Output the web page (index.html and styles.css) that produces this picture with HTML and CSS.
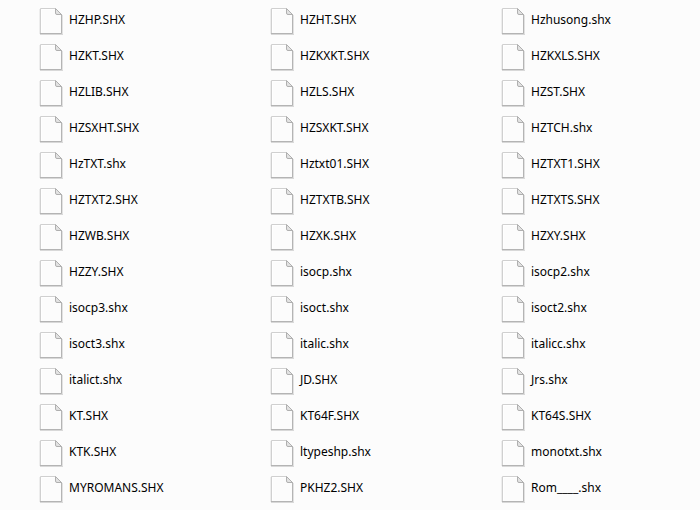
FILE: index.html
```
<!DOCTYPE html>
<html lang="en">
<head>
    <meta charset="UTF-8">
    <meta name="viewport" content="width=device-width, initial-scale=1.0">
    <title>Fonts</title>
    <link rel="stylesheet" href="styles.css">
</head>
<body>
    <!-- Blank document icon, shared by all files -->
    <svg class="sprite" aria-hidden="true">
        <defs>
            <linearGradient id="paper" x1="0" y1="0" x2="1" y2="1">
                <stop offset="0" stop-color="#ffffff"/>
                <stop offset="1" stop-color="#f2f2f2"/>
            </linearGradient>
        </defs>
        <symbol id="file" viewBox="0 0 26 30">
            <path d="M2 28.500H25" fill="none" stroke="#000" stroke-opacity=".14"/>
            <path d="M24.500 9V28" fill="none" stroke="#000" stroke-opacity=".1"/>
            <path d="M1.500 3V28" fill="none" stroke="#000" stroke-opacity=".06"/>
            <path d="M2.500 2.500H17.500L23.500 8.500V27.500H2.500Z" fill="url(#paper)" stroke="#d0d0d0"/>
            <path d="M2 27.500H23.500V8" fill="none" stroke="#b4b4b4"/>
            <path d="M3.500 26.500V3.500H17" fill="none" stroke="#fff"/>
            <path d="M17.500 2.500L23.500 8.500H19Q17.500 8.500 17.500 7Z" fill="#e2e2e2" stroke="#b0b0b0"/>
        </symbol>
    </svg>

    <ul class="files">
        <li class="file"><svg class="icon"><use href="#file"/></svg><span>HZHP.SHX</span></li>
        <li class="file"><svg class="icon"><use href="#file"/></svg><span>HZHT.SHX</span></li>
        <li class="file"><svg class="icon"><use href="#file"/></svg><span>Hzhusong.shx</span></li>
        <li class="file"><svg class="icon"><use href="#file"/></svg><span>HZKT.SHX</span></li>
        <li class="file"><svg class="icon"><use href="#file"/></svg><span>HZKXKT.SHX</span></li>
        <li class="file"><svg class="icon"><use href="#file"/></svg><span>HZKXLS.SHX</span></li>
        <li class="file"><svg class="icon"><use href="#file"/></svg><span>HZLIB.SHX</span></li>
        <li class="file"><svg class="icon"><use href="#file"/></svg><span>HZLS.SHX</span></li>
        <li class="file"><svg class="icon"><use href="#file"/></svg><span>HZST.SHX</span></li>
        <li class="file"><svg class="icon"><use href="#file"/></svg><span>HZSXHT.SHX</span></li>
        <li class="file"><svg class="icon"><use href="#file"/></svg><span>HZSXKT.SHX</span></li>
        <li class="file"><svg class="icon"><use href="#file"/></svg><span>HZTCH.shx</span></li>
        <li class="file"><svg class="icon"><use href="#file"/></svg><span>HzTXT.shx</span></li>
        <li class="file"><svg class="icon"><use href="#file"/></svg><span>Hztxt01.SHX</span></li>
        <li class="file"><svg class="icon"><use href="#file"/></svg><span>HZTXT1.SHX</span></li>
        <li class="file"><svg class="icon"><use href="#file"/></svg><span>HZTXT2.SHX</span></li>
        <li class="file"><svg class="icon"><use href="#file"/></svg><span>HZTXTB.SHX</span></li>
        <li class="file"><svg class="icon"><use href="#file"/></svg><span>HZTXTS.SHX</span></li>
        <li class="file"><svg class="icon"><use href="#file"/></svg><span>HZWB.SHX</span></li>
        <li class="file"><svg class="icon"><use href="#file"/></svg><span>HZXK.SHX</span></li>
        <li class="file"><svg class="icon"><use href="#file"/></svg><span>HZXY.SHX</span></li>
        <li class="file"><svg class="icon"><use href="#file"/></svg><span>HZZY.SHX</span></li>
        <li class="file"><svg class="icon"><use href="#file"/></svg><span>isocp.shx</span></li>
        <li class="file"><svg class="icon"><use href="#file"/></svg><span>isocp2.shx</span></li>
        <li class="file"><svg class="icon"><use href="#file"/></svg><span>isocp3.shx</span></li>
        <li class="file"><svg class="icon"><use href="#file"/></svg><span>isoct.shx</span></li>
        <li class="file"><svg class="icon"><use href="#file"/></svg><span>isoct2.shx</span></li>
        <li class="file"><svg class="icon"><use href="#file"/></svg><span>isoct3.shx</span></li>
        <li class="file"><svg class="icon"><use href="#file"/></svg><span>italic.shx</span></li>
        <li class="file"><svg class="icon"><use href="#file"/></svg><span>italicc.shx</span></li>
        <li class="file"><svg class="icon"><use href="#file"/></svg><span>italict.shx</span></li>
        <li class="file"><svg class="icon"><use href="#file"/></svg><span>JD.SHX</span></li>
        <li class="file"><svg class="icon"><use href="#file"/></svg><span>Jrs.shx</span></li>
        <li class="file"><svg class="icon"><use href="#file"/></svg><span>KT.SHX</span></li>
        <li class="file"><svg class="icon"><use href="#file"/></svg><span>KT64F.SHX</span></li>
        <li class="file"><svg class="icon"><use href="#file"/></svg><span>KT64S.SHX</span></li>
        <li class="file"><svg class="icon"><use href="#file"/></svg><span>KTK.SHX</span></li>
        <li class="file"><svg class="icon"><use href="#file"/></svg><span>ltypeshp.shx</span></li>
        <li class="file"><svg class="icon"><use href="#file"/></svg><span>monotxt.shx</span></li>
        <li class="file"><svg class="icon"><use href="#file"/></svg><span>MYROMANS.SHX</span></li>
        <li class="file"><svg class="icon"><use href="#file"/></svg><span>PKHZ2.SHX</span></li>
        <li class="file"><svg class="icon"><use href="#file"/></svg><span>Rom____.shx</span></li>
    </ul>
</body>
</html>
```

FILE: styles.css
```
body {
    margin: 0;
    background-color: #fcfcfc;
    color: #000;
    font-family: "Noto Sans", "Open Sans", sans-serif;
    font-size: 12px;
    line-height: 16px;
}

.sprite {
    display: none;
}

/* File list */
.files {
    display: grid;
    grid-template-columns: repeat(3, 1fr);
    grid-auto-rows: 36px;
    margin: 0;
    padding: 2px 7px 0 0;
    list-style: none;
}

.file {
    display: flex;
    align-items: center;
    gap: 5px;
    padding-left: 38px;
}

.icon {
    width: 26px;
    height: 30px;
    margin-top: 2px;
}
```
